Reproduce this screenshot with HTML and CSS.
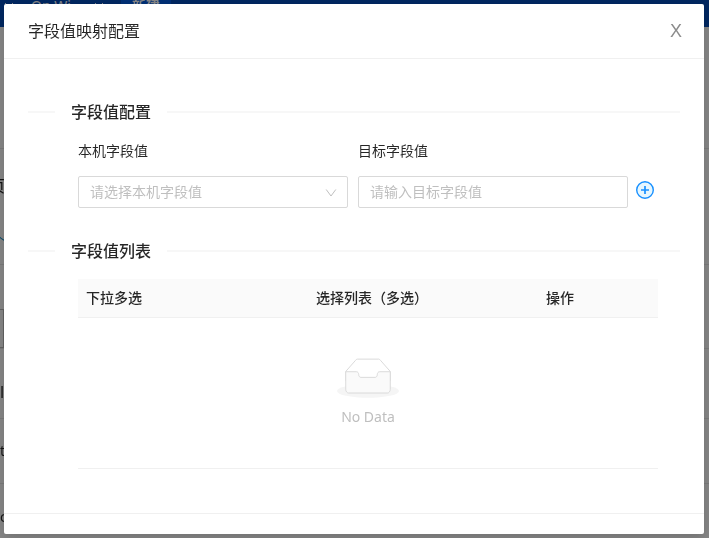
FILE: index.html
```html
<!DOCTYPE html>
<html lang="zh-CN">
<head>
    <meta charset="UTF-8">
    <meta name="viewport" content="width=device-width, initial-scale=1.0">
    <title>字段值映射配置</title>
    <link rel="stylesheet" href="styles.css">
</head>
<body>

    <!-- page behind the mask -->
    <div class="page">
        <header class="topbar">
            <svg class="caret" width="10" height="6" viewBox="0 0 10 6" fill="none" stroke="currentColor">
                <path d="M1 1L5 5L9 1" />
            </svg>
            <span class="brand">On Wi</span>
            <svg class="caret" width="10" height="6" viewBox="0 0 10 6" fill="none" stroke="currentColor">
                <path d="M1 1L5 5L9 1" />
            </svg>
            <span class="tab">新建</span>
        </header>
        <div class="rows">
            <div class="row row-first"></div>
            <div class="row row-title">
                <p class="name">页</p>
                <p class="link">个</p>
            </div>
            <div class="row row-box"><span class="box"></span></div>
            <div class="row row-name">l</div>
            <div class="row row-link">t</div>
            <div class="row-last">c</div>
        </div>
    </div>

    <div class="mask">
        <div class="modal" role="dialog" aria-labelledby="modalTitle">
            <div class="modal-header">
                <h1 class="modal-title" id="modalTitle">字段值映射配置</h1>
                <button type="button" class="modal-close">X</button>
            </div>

            <div class="modal-body">
                <h2 class="divider">字段值配置</h2>
                <form class="fields">
                    <div class="field">
                        <label for="localValue">本机字段值</label>
                        <div class="select-wrap">
                            <select id="localValue" class="control placeholder">
                                <option>请选择本机字段值</option>
                            </select>
                            <svg class="arrow" width="12" height="12" viewBox="0 0 12 12" fill="none" stroke="currentColor">
                                <path d="M1.2 2.5L6 9L10.8 2.5" />
                            </svg>
                        </div>
                    </div>
                    <div class="field">
                        <label for="targetValue">目标字段值</label>
                        <input type="text" id="targetValue" class="control" placeholder="请输入目标字段值">
                    </div>
                    <button type="button" class="add" aria-label="添加">
                        <svg width="18" height="18" viewBox="0 0 18 18" fill="#e6f7ff" stroke="#1890ff">
                            <circle cx="9" cy="9" r="8.3" stroke-width="1.4" />
                            <path d="M9 5V13M5 9H13" stroke-width="1.7" />
                        </svg>
                    </button>
                </form>

                <h2 class="divider">字段值列表</h2>
                <table class="list">
                    <thead>
                        <tr>
                            <th>下拉多选</th>
                            <th>选择列表（多选）</th>
                            <th class="col-action">操作</th>
                        </tr>
                    </thead>
                    <tbody>
                        <tr>
                            <td colspan="3">
                                <div class="empty">
                                    <svg width="62" height="40" viewBox="0 0 64 41">
                                        <g transform="translate(0 1)" fill="none" fill-rule="evenodd">
                                            <ellipse fill="#f5f5f5" cx="32" cy="33" rx="32" ry="7" />
                                            <g fill-rule="nonzero" stroke="#d9d9d9">
                                                <path fill="#fff" d="M55 12.76L44.854 1.258C44.367.474 43.656 0 42.907 0H21.093c-.749 0-1.46.474-1.947 1.257L9 12.761V22h46v-9.24z" />
                                                <path fill="#fafafa" d="M41.613 15.931c0-1.605.994-2.93 2.227-2.931H55v18.137C55 33.26 53.68 35 52.05 35h-40.1C10.32 35 9 33.259 9 31.137V13h11.16c1.233 0 2.227 1.323 2.227 2.928v.022c0 1.605 1.005 2.901 2.237 2.901h14.752c1.232 0 2.237-1.308 2.237-2.913v-.007z" />
                                            </g>
                                        </g>
                                    </svg>
                                    <p>No Data</p>
                                </div>
                            </td>
                        </tr>
                    </tbody>
                </table>
            </div>

            <div class="modal-footer"></div>
        </div>
    </div>

</body>
</html>
```
FILE: styles.css
```css
* {
    margin: 0;
    padding: 0;
    box-sizing: border-box;
}

body {
    font-family: "Noto Sans", "Noto Sans CJK SC", sans-serif;
    font-size: 14px;
    line-height: 22px;
    color: rgba(0, 0, 0, 0.85);
    background: #fff;
}

/* page behind the mask */
.page {
    position: fixed;
    inset: 0;
    overflow: hidden;
}

.topbar {
    display: flex;
    gap: 17px;
    height: 27px;
    padding-left: 4px;
    background: #004ab8;
    color: #fff;
    line-height: 12px;
}

.caret {
    margin-top: 2px;
}

.brand {
    width: 46px;
}

.tab {
    height: 27px;
    width: 50px;
    background: #005be0;
    text-align: center;
    font-weight: bold;
}

.row {
    border-bottom: 1px solid #e8e8e8;
}

.row-first {
    height: 122px;
}

.row-title {
    height: 116px;
    padding-top: 26px;
}

.name {
    margin-bottom: 33px;
    font-size: 16px;
    text-indent: -11px;
}

.link {
    color: #1890c8;
    text-indent: -9px;
}

.row-box {
    height: 84px;
    padding-top: 44px;
}

.box {
    display: block;
    width: 4px;
    height: 39px;
    border: 1px solid #bbb;
    border-left: 0;
}

.row-name {
    height: 70px;
    padding-top: 32px;
    font-size: 16px;
}

.row-link {
    height: 65px;
    padding-top: 21px;
}

.row-last {
    padding-top: 22px;
}

.mask {
    position: relative;
    min-height: 100vh;
    padding: 4px 5px 4px 4px;
    background: rgba(0, 0, 0, 0.48);
}

.modal {
    background: #fff;
    border-radius: 2px;
    box-shadow: 0 4px 12px rgba(0, 0, 0, 0.15);
}

.modal-header {
    display: flex;
    align-items: center;
    justify-content: space-between;
    padding: 16px 22px 16px 24px;
    border-bottom: 1px solid #f0f0f0;
}

.modal-title {
    font-size: 16px;
    line-height: 22px;
    font-weight: 400;
}

.modal-close,
.add {
    display: flex;
    border: 0;
    background: transparent;
    cursor: pointer;
}

.modal-close {
    color: #8c8c8c;
    font-family: "Liberation Sans", sans-serif;
    font-size: 18px;
    line-height: 22px;
}

.modal-body {
    padding: 40px 24px 44px;
}

.divider {
    display: flex;
    align-items: center;
    gap: 16px;
    font-size: 16px;
    line-height: 26px;
    font-weight: 500;
}

.divider::before,
.divider::after {
    content: "";
    height: 2px;
    background: #f7f7f7;
}

.divider::before {
    width: 27px;
}

.divider::after {
    flex: 1;
}

.fields {
    display: flex;
    gap: 10px;
    padding: 15px 26px 30px 50px;
}

.field {
    flex: 1;
}

.field label {
    display: block;
    margin-bottom: 14px;
}

.control {
    display: block;
    width: 100%;
    height: 32px;
    padding: 0 11px 2px;
    border: 1px solid #d9d9d9;
    border-radius: 2px;
    background: #fff;
    font-family: inherit;
    font-size: 14px;
    appearance: none;
    outline: 0;
}

.placeholder,
.control::placeholder {
    color: #bfbfbf;
}

.select-wrap {
    position: relative;
}

.arrow {
    position: absolute;
    right: 11px;
    top: 11px;
    color: #bfbfbf;
    pointer-events: none;
}

.add {
    align-self: flex-end;
    margin-left: -2px;
    padding-bottom: 9px;
}

.list {
    width: calc(100% - 72px);
    margin: 15px 22px 0 50px;
    border-collapse: collapse;
    table-layout: fixed;
}

.list th {
    padding: 8px;
    background: #fafafa;
    border-bottom: 1px solid #f0f0f0;
    text-align: left;
    font-weight: 500;
}

.col-action {
    width: 120px;
}

.list td {
    padding: 8px;
    border-bottom: 1px solid #f0f0f0;
}

.empty {
    margin: 32px 0;
    text-align: center;
    color: #bfbfbf;
}

.empty svg {
    display: block;
    margin: 0 auto 8px;
}

.modal-footer {
    height: 21px;
    border-top: 1px solid #f0f0f0;
}
```
